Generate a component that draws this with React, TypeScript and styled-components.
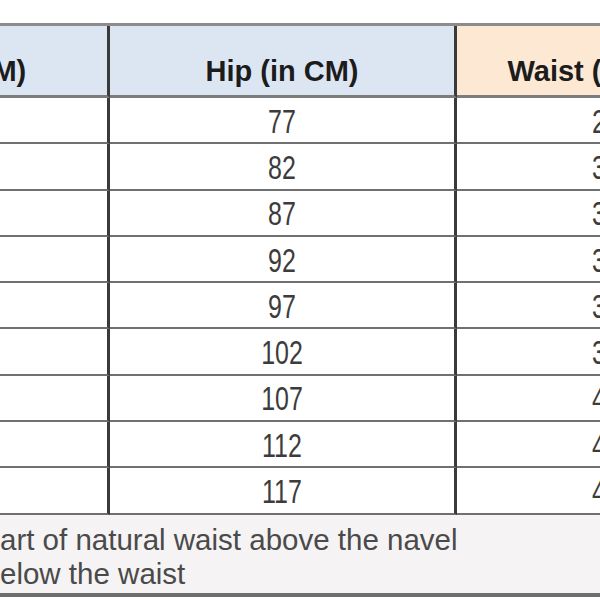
import React from "react";
import styled, { createGlobalStyle } from "styled-components";

const Global = createGlobalStyle`
  html, body { margin: 0; padding: 0; background: #ffffff; overflow: hidden; }
  body { width: 600px; height: 600px; font-family: "Liberation Sans", Arial, sans-serif; }
`;

const Page = styled.div`
  width: 600px;
  height: 600px;
  overflow: hidden;
  padding-top: 23px;
  box-sizing: border-box;
  background: #ffffff;
`;

const Sheet = styled.div`
  margin-left: -237px;
  width: 980px;
  border-top: 3px solid #8c8c8c;
  border-bottom: 4px solid #6e6e6e;
`;

const Grid = styled.div`
  display: grid;
  grid-template-columns: 347px 347px 286px;
`;

const HeadCell = styled.div<{ $tone: "blue" | "peach"; $last?: boolean }>`
  height: 72px;
  box-sizing: border-box;
  display: flex;
  align-items: flex-start;
  justify-content: center;
  padding-top: 29px;
  padding-left: ${(p) => (p.$last ? "12px" : "0")};
  background: ${(p) => (p.$tone === "blue" ? "#dce6f3" : "#fde8d4")};
  border-bottom: 3px solid #7c7c7c;
  border-right: ${(p) => (p.$last ? "none" : "3px solid #3a3a3a")};
  font-weight: 700;
  font-size: 29px;
  line-height: 33px;
  color: #1c1c1c;
`;

const Cell = styled.div<{ $last?: boolean }>`
  height: 46.3px;
  box-sizing: border-box;
  display: flex;
  align-items: center;
  justify-content: center;
  padding-left: ${(p) => (p.$last ? "12px" : "0")};
  border-bottom: 2px solid #707070;
  border-right: ${(p) => (p.$last ? "none" : "3px solid #3a3a3a")};
  background: #ffffff;
`;

const Num = styled.span`
  display: inline-block;
  font-size: 25px;
  color: #3c3c3c;
  transform: scaleY(1.3);
  margin-top: 2px;
`;

const Footer = styled.div`
  background: #f5f3f4;
  padding: 8px 0 2px 237px;
  font-size: 29.5px;
  line-height: 34px;
  color: #4a4a4a;
`;

const Line = styled.div`
  white-space: nowrap;
`;

const rows = [
  { a: 61, hip: 77, w: 28 },
  { a: 66, hip: 82, w: 30 },
  { a: 71, hip: 87, w: 32 },
  { a: 76, hip: 92, w: 34 },
  { a: 81, hip: 97, w: 36 },
  { a: 86, hip: 102, w: 38 },
  { a: 91, hip: 107, w: 40 },
  { a: 96, hip: 112, w: 42 },
  { a: 101, hip: 117, w: 44 },
];

export default function App() {
  return (
    <Page>
      <Global />
      <Sheet>
        <Grid>
          <HeadCell $tone="blue">Waist (in CM)</HeadCell>
          <HeadCell $tone="blue">Hip (in CM)</HeadCell>
          <HeadCell $tone="peach" $last>
            Waist (in inch)
          </HeadCell>
          {rows.map((r) => (
            <React.Fragment key={r.hip}>
              <Cell>
                <Num>{r.a}</Num>
              </Cell>
              <Cell>
                <Num>{r.hip}</Num>
              </Cell>
              <Cell $last>
                <Num>{r.w}</Num>
              </Cell>
            </React.Fragment>
          ))}
        </Grid>
        <Footer>
          <Line>art of natural waist above the navel</Line>
          <Line>elow the waist</Line>
        </Footer>
      </Sheet>
    </Page>
  );
}
